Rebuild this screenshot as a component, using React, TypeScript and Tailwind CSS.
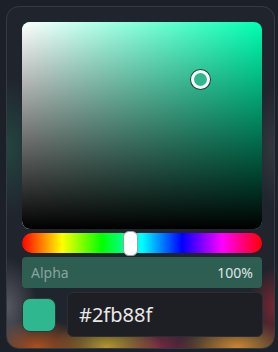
import React from "react";

const hue = 162;
const sat = 0.745;
const val = 0.72;

export default function App() {
  return (
    <div className="w-[278px] h-[352px] bg-[#1c2029] pt-[6px] pl-[6px] font-['Noto_Sans',sans-serif]">
      <div className="w-[269px] h-[343px] rounded-[13px] border border-[#353a45] pl-[15px] pr-[11px] pt-[15px] pb-[11px] flex flex-col gap-[4px] bg-[#20242d] bg-[radial-gradient(ellipse_40px_70px_at_0px_140px,rgba(40,110,90,0.45),transparent),radial-gradient(ellipse_30px_50px_at_0px_300px,rgba(140,140,150,0.5),transparent),radial-gradient(ellipse_30px_60px_at_270px_140px,rgba(90,100,100,0.35),transparent),radial-gradient(ellipse_30px_40px_at_270px_300px,rgba(150,40,50,0.8),transparent),radial-gradient(ellipse_55px_28px_at_30px_340px,rgba(170,80,30,1),transparent),radial-gradient(ellipse_55px_28px_at_100px_340px,rgba(180,150,45,1),transparent),radial-gradient(ellipse_45px_25px_at_150px_340px,rgba(120,40,65,1),transparent),radial-gradient(ellipse_60px_28px_at_230px_340px,rgba(200,135,50,1),transparent)]">
        {/* saturation / value */}
        <div
          className="relative w-[240px] h-[207px] rounded-[8px] overflow-hidden shrink-0"
          style={{ backgroundColor: `hsl(${hue},100%,50%)` }}
        >
          <div className="absolute inset-0 bg-gradient-to-r from-white to-transparent" />
          <div className="absolute inset-0 bg-gradient-to-b from-transparent to-black" />
          <div
            className="absolute w-[19px] h-[19px] -ml-[9.5px] -mt-[9.5px] rounded-full border-[3px] border-white bg-[#2fb88f] shadow-[0_0_0_1px_rgba(0,0,0,0.6)]"
            style={{ left: `${sat * 100}%`, top: `${(1 - val) * 100}%` }}
          />
        </div>

        {/* hue */}
        <div className="relative w-[240px] h-[20px] rounded-full shrink-0 bg-[linear-gradient(to_right,#ff0000,#ffff00,#00ff00,#00ffff,#0000ff,#ff00ff,#ff0000)]">
          <div
            className="absolute top-[-2px] w-[15px] h-[25px] -ml-[7.5px] rounded-[6px] bg-white border border-[#9aa0a6]"
            style={{ left: `${(hue / 360) * 100}%` }}
          />
        </div>

        {/* alpha */}
        <div className="w-[240px] h-[31px] rounded-[4px] bg-[#2e5e52] flex items-center justify-between pl-[9px] pr-[9px] shrink-0">
          <span className="text-[14px] text-[#8aa39c]">Alpha</span>
          <span className="text-[14px] text-[#dfe6e4]">100%</span>
        </div>

        {/* swatch + hex */}
        <div className="flex items-center gap-[11px] h-[45px] shrink-0">
          <div className="w-[34px] h-[34px] rounded-[8px] bg-[#2fb88f] border border-[#2a3a36]" />
          <div className="flex-1 h-[45px] rounded-[6px] bg-[#1e1f24] border border-[#2c2e34] flex items-center pl-[11px]">
            <span className="text-[20px] text-[#e8e8e8]">#2fb88f</span>
          </div>
        </div>
      </div>
    </div>
  );
}
